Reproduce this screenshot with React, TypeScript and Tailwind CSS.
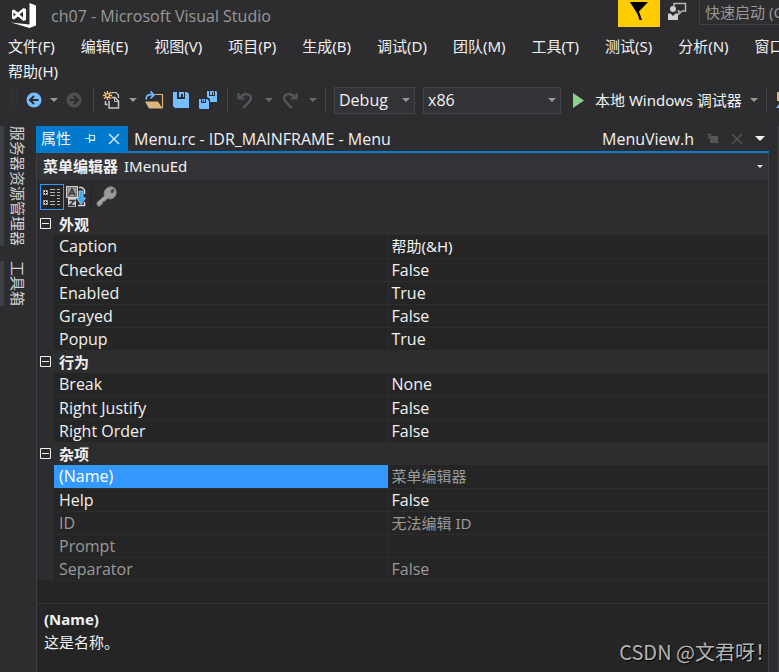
import { useState } from 'react'

interface Property {
  name: string
  value: string
  readOnly?: boolean
}

interface Category {
  label: string
  properties: Property[]
}

const MENU_ITEMS = [
  '文件(F)',
  '编辑(E)',
  '视图(V)',
  '项目(P)',
  '生成(B)',
  '调试(D)',
  '团队(M)',
  '工具(T)',
  '测试(S)',
  '分析(N)',
  '窗口',
]

const CATEGORIES: Category[] = [
  {
    label: '外观',
    properties: [
      { name: 'Caption', value: '帮助(&H)' },
      { name: 'Checked', value: 'False' },
      { name: 'Enabled', value: 'True' },
      { name: 'Grayed', value: 'False' },
      { name: 'Popup', value: 'True' },
    ],
  },
  {
    label: '行为',
    properties: [
      { name: 'Break', value: 'None' },
      { name: 'Right Justify', value: 'False' },
      { name: 'Right Order', value: 'False' },
    ],
  },
  {
    label: '杂项',
    properties: [
      { name: '(Name)', value: '菜单编辑器', readOnly: true },
      { name: 'Help', value: 'False' },
      { name: 'ID', value: '无法编辑 ID', readOnly: true },
      { name: 'Prompt', value: '', readOnly: true },
      { name: 'Separator', value: 'False', readOnly: true },
    ],
  },
]

// Chinese glyphs look larger than Latin ones, so they are set one size down
const hasChinese = (text: string) => /[\u4e00-\u9fff]/.test(text)

function Caret({ className = 'text-[#999999]' }: { className?: string }) {
  return (
    <svg width="8" height="4" viewBox="0 0 8 4" className={`shrink-0 ${className}`} aria-hidden="true">
      <path d="M0 0h8L4 4z" fill="currentColor" />
    </svg>
  )
}

function Separator() {
  return <div className="h-6 w-px shrink-0 bg-[#46464a]" />
}

function Logo() {
  return (
    <svg width="26" height="26" viewBox="0 0 26 26" className="shrink-0" aria-hidden="true">
      <path d="M18.5 0L25 2.500V22.500L18.500 25L0 19.500L18.500 21.500z" fill="#fff" />
      <path
        d="M1 7.500L3 6.500L7 9.500L12.500 5L15 6V17L12.500 18L7 13.500L3 16.500L1 15.500zM2.500 9.500V13.500L5 11.500zM12 8.500L8.500 11.500L12 14.500z"
        fill="#fff"
        fillRule="evenodd"
      />
    </svg>
  )
}

function FeedbackIcon() {
  return (
    <svg width="19" height="19" viewBox="0 0 19 19" aria-hidden="true">
      <path d="M6 4V1.500H17.500V9H14L11 12V9H9.500" fill="none" stroke="#b8b8b8" strokeWidth="1.500" />
      <circle cx="5" cy="7" r="3" fill="#d0d0d0" />
      <path d="M0 11.500H2.500L5 14L7.500 11.500H10V18H0z" fill="#d0d0d0" />
    </svg>
  )
}

function TitleBar() {
  return (
    <header className="flex h-[34px] items-start">
      <div className="flex h-8 min-w-0 flex-1 items-center gap-[14px] pl-[11px]">
        <Logo />
        <h1 className="truncate font-['Open_Sans',sans-serif] text-base text-[#999999]">ch07 - Microsoft Visual Studio</h1>
      </div>
      <button aria-label="通知" className="h-[27px] w-[42px] shrink-0 bg-[#ffcc00]">
        <svg width="42" height="27" viewBox="0 0 42 27" aria-hidden="true">
          <path d="M12 2H30L21 11.500L24 20H21.500L19.500 14z" fill="#000" />
        </svg>
      </button>
      <button aria-label="反馈" className="mr-3 ml-2 h-[22px] shrink-0">
        <FeedbackIcon />
      </button>
      <input
        aria-label="快速启动"
        placeholder="快速启动 (Ctrl+Q)"
        className="h-[25px] w-20 shrink-0 border border-t-0 border-r-0 border-[#3f3f46] pl-[5px] text-[15px] outline-none placeholder:text-[#999999]"
      />
    </header>
  )
}

function MenuBar() {
  return (
    <nav className="pl-2 text-[15px] leading-[25px]">
      <div className="flex gap-[26px] overflow-hidden whitespace-nowrap">
        {MENU_ITEMS.map((item) => (
          <button key={item} className="shrink-0">
            {item}
          </button>
        ))}
      </div>
      <button className="block">帮助(H)</button>
    </nav>
  )
}

function Grip() {
  return (
    <svg width="7" height="22" viewBox="0 0 7 22" className="shrink-0" aria-hidden="true">
      {[0, 4, 8, 12, 16, 20].map((y) => (
        <g key={y} fill="#46464a">
          <rect x="0" y={y} width="1" height="1" />
          <rect x="4" y={y} width="1" height="1" />
          <rect x="2" y={y + 2} width="1" height="1" />
          <rect x="6" y={y + 2} width="1" height="1" />
        </g>
      ))}
    </svg>
  )
}

function BackIcon() {
  return (
    <svg width="16" height="16" viewBox="0 0 16 16" aria-hidden="true">
      <circle cx="8" cy="8" r="7.500" fill="#75beff" />
      <path d="M12.500 8H4.500M8 4L4 8L8 12" fill="none" stroke="#2d2d30" strokeWidth="2" />
    </svg>
  )
}

function ForwardIcon() {
  return (
    <svg width="16" height="16" viewBox="0 0 16 16" aria-hidden="true">
      <circle cx="8" cy="8" r="7.500" fill="#505053" />
      <path d="M3.500 8H11.500M8 4L12 8L8 12" fill="none" stroke="#2d2d30" strokeWidth="2" />
    </svg>
  )
}

function NewProjectIcon() {
  return (
    <svg width="18" height="18" viewBox="0 0 18 18" aria-hidden="true">
      <path d="M9 2.500V1.500H13L15.500 4V7" fill="none" stroke="#c8c8c8" strokeWidth="1.200" />
      <path d="M2.500 10V13.500H4.500" fill="none" stroke="#c8c8c8" strokeWidth="1.500" />
      <path d="M8.500 6.500H12L15.500 10V17H6V9.500" fill="none" stroke="#c8c8c8" strokeWidth="1.500" />
      <path d="M11.500 6.500V10.500H15" fill="none" stroke="#c8c8c8" />
      <path d="M4.500 0V9M0 4.500H9M1.200 1.200L7.800 7.800M7.800 1.200L1.200 7.800" stroke="#ffc66d" strokeWidth="1.300" />
      <circle cx="4.500" cy="4.500" r="1.200" fill="#2d2d30" />
    </svg>
  )
}

function OpenIcon() {
  return (
    <svg width="19" height="18" viewBox="0 0 19 18" aria-hidden="true">
      <path d="M10 3.500H17.500V17" fill="none" stroke="#dcb67a" strokeWidth="1.200" />
      <path d="M0 10.500H13L17.500 17.500H4z" fill="#dcb67a" />
      <path d="M1.500 8.500C0.500 4 4 3 8 4" fill="none" stroke="#75beff" strokeWidth="1.700" />
      <path d="M5.500 0.500L9 4L5.500 7.500" fill="none" stroke="#75beff" strokeWidth="1.700" />
    </svg>
  )
}

function SaveIcon() {
  return (
    <svg width="16" height="16" viewBox="0 0 16 16" aria-hidden="true">
      <path d="M0 0H4V7H12V0H14L16 2V16H2L0 14z" fill="#75beff" />
      <path d="M6 0H11V5H10V2H8V5H6z" fill="#75beff" />
    </svg>
  )
}

function SaveAllIcon() {
  return (
    <svg width="19" height="19" viewBox="0 0 19 19" aria-hidden="true">
      <path d="M8 0H10V5H16V0H17L18 1V11H11V8L8 6z" fill="#75beff" />
      <path d="M11 0H15V4H14V1H13V4H11z" fill="#75beff" />
      <path d="M0 8H2V12H7V8H8L10 10V18H1L0 17z" fill="#75beff" />
      <path d="M3 8H6V11H5V9H4V11H3z" fill="#75beff" />
    </svg>
  )
}

function UndoIcon({ flipped = false }: { flipped?: boolean }) {
  return (
    <svg width="17" height="17" viewBox="0 0 17 17" aria-hidden="true">
      <g transform={flipped ? 'translate(17 0) scale(-1 1)' : undefined} fill="none" stroke="#555558">
        <path d="M2.500 6.500C7 0 13.500 1.500 14 6C14 9 10 12 6.500 16" strokeWidth="2.500" />
        <path d="M1.500 1V6.500H7.500" strokeWidth="2.200" />
      </g>
    </svg>
  )
}

interface ToolbarSelectProps {
  label: string
  options: string[]
  className: string
}

function ToolbarSelect({ label, options, className }: ToolbarSelectProps) {
  return (
    <div className={`relative shrink-0 ${className}`}>
      <select
        aria-label={label}
        className="h-[27px] w-full appearance-none border border-[#434346] bg-[#333337] pl-1 font-['Open_Sans',sans-serif] text-base leading-6 outline-none"
      >
        {options.map((option) => (
          <option key={option}>{option}</option>
        ))}
      </select>
      <span className="pointer-events-none absolute inset-y-0 right-[5px] flex items-center">
        <Caret />
      </span>
    </div>
  )
}

function Toolbar() {
  return (
    <div className="flex h-8 items-center overflow-hidden pl-[10px]">
      <Grip />
      <button aria-label="向后导航" className="ml-[9px]"><BackIcon /></button>
      <button aria-label="后退历史" className="ml-2"><Caret /></button>
      <button aria-label="向前导航" className="mr-[11px] ml-2"><ForwardIcon /></button>
      <Separator />
      <button aria-label="新建项目" className="ml-[9px]"><NewProjectIcon /></button>
      <button aria-label="新建" className="ml-2"><Caret /></button>
      <button aria-label="打开文件" className="ml-2"><OpenIcon /></button>
      <button aria-label="保存" className="ml-[9px]"><SaveIcon /></button>
      <button aria-label="全部保存" className="mr-[9px] ml-[10px]"><SaveAllIcon /></button>
      <Separator />
      <button aria-label="撤消" className="ml-[9px]"><UndoIcon /></button>
      <button aria-label="撤消历史" className="ml-[11px]"><Caret className="text-[#6a6a6d]" /></button>
      <button aria-label="重做" className="ml-2"><UndoIcon flipped /></button>
      <button aria-label="重做历史" className="mr-2 ml-[11px]"><Caret className="text-[#6a6a6d]" /></button>
      <Separator />
      <ToolbarSelect label="解决方案配置" options={['Debug', 'Release']} className="mr-2 ml-2 w-[81px]" />
      <ToolbarSelect label="解决方案平台" options={['x86', 'x64']} className="w-[138px]" />
      <button className="ml-3 flex shrink-0 items-center text-[15px] whitespace-nowrap">
        <svg width="11" height="15" viewBox="0 0 11 15" className="mr-[11px]" aria-hidden="true">
          <path d="M0 0L11 7.500L0 15z" fill="#8dd28a" />
        </svg>
        本地 Windows 调试器
        <Caret className="mr-2 ml-2 text-[#999999]" />
      </button>
      <Separator />
      <svg width="16" height="16" viewBox="0 0 16 16" className="ml-[9px] shrink-0" aria-hidden="true">
        <path d="M1 0H15V9H1z" fill="#dcb67a" />
        <path d="M0 16L4 11H8L12 16z" fill="#75beff" />
      </svg>
    </div>
  )
}

function SideStrip() {
  return (
    <aside className="flex w-9 shrink-0 flex-col items-start gap-[15px] text-[15px] text-[#d0d0d0]">
      <button className="w-[31px] border-l-4 border-[#3f3f46] leading-[27px] [text-orientation:sideways] [writing-mode:vertical-rl]">
        服务器资源管理器
      </button>
      <button className="w-[31px] border-l-4 border-[#3f3f46] leading-[27px] [text-orientation:sideways] [writing-mode:vertical-rl]">
        工具箱
      </button>
    </aside>
  )
}

function CloseIcon({ className }: { className: string }) {
  return (
    <svg width="12" height="12" viewBox="0 0 12 12" className={className} aria-hidden="true">
      <path d="M1 1L11 11M11 1L1 11" stroke="currentColor" strokeWidth="1.500" />
    </svg>
  )
}

function TabRow() {
  return (
    <div className="flex h-[27px] items-stretch border-b-2 border-[#007acc] text-base">
      <div className="flex w-[92px] shrink-0 items-center bg-[#007acc] pl-[5px]">
        <button className="text-[15px]">属性</button>
        <button aria-label="固定" className="ml-[14px]">
          <svg width="11" height="9" viewBox="0 0 11 9" aria-hidden="true">
            <path d="M0 4.500H4M4.500 0V9M5 1.500H9.500V6.500H5M5 6H10" fill="none" stroke="#d0e6f5" strokeWidth="1.200" />
          </svg>
        </button>
        <button aria-label="关闭" className="ml-3">
          <CloseIcon className="text-[#d0e6f5]" />
        </button>
      </div>
      <button className="min-w-0 truncate pl-[6px] font-['Open_Sans',sans-serif]">Menu.rc - IDR_MAINFRAME - Menu</button>
      <div className="ml-auto flex shrink-0 items-center pr-1">
        <button className="font-['Open_Sans',sans-serif]">MenuView.h</button>
        <button aria-label="保持打开" className="ml-[13px]">
          <svg width="12" height="9" viewBox="0 0 12 9" aria-hidden="true">
            <path d="M0 0H4V2H11V8H12V9H3V4H0V3H2V1H0z" fill="#555558" />
          </svg>
        </button>
        <button aria-label="关闭预览" className="ml-3">
          <CloseIcon className="text-[#555558]" />
        </button>
        <button aria-label="活动文件" className="ml-3">
          <svg width="10" height="5" viewBox="0 0 10 5" aria-hidden="true">
            <path d="M0 0H10L5 5z" fill="#f1f1f1" />
          </svg>
        </button>
      </div>
    </div>
  )
}

function CategorizedIcon() {
  return (
    <svg width="18" height="18" viewBox="0 0 18 18" aria-hidden="true">
      <path
        d="M0.500 2.500H4.500V6.500H0.500zM0.500 12.500H4.500V16.500H0.500z"
        fill="#f1f1f1"
        stroke="#a0a0a0"
      />
      <path d="M1 4.500H4M2.500 3V6M1 14.500H4M2.500 13V16" stroke="#252526" />
      <path
        d="M7 1.500H12M14 1.500H17M7 4.500H12M14 4.500H17M7 7.500H12M14 7.500H17M14 10.500H17M7 13.500H12M14 13.500H17M7 16.500H12M14 16.500H17"
        stroke="#b4b4b4"
      />
    </svg>
  )
}

function AlphabeticalIcon() {
  return (
    <svg width="20" height="21" viewBox="0 0 20 21" aria-hidden="true">
      <path d="M0 0H12V12H0zM2 12H10V21H2z" fill="#d0d0d0" />
      <path d="M1.500 1.500H10.500V10.500H1.500z" fill="#9a9a9a" stroke="#777" />
      <path d="M3 9.500L6 3L9 9.500M4 7.500H8M3.500 14.500H8.500L3.500 19.500H9" fill="none" stroke="#333337" strokeWidth="1.500" />
      <path d="M13 1.500H16L18.500 4V8M12 19.500H18.500V16" fill="none" stroke="#d8d8d8" strokeWidth="1.500" />
      <path d="M13 5H17V12H19.500L15 18.500L10.500 12H13z" fill="#3fa9f0" stroke="#b8dcf5" strokeWidth="0.700" />
    </svg>
  )
}

function WrenchIcon() {
  return (
    <svg width="21" height="21" viewBox="0 0 21 21" aria-hidden="true">
      <path
        d="M1 16.500L8.500 10C7 5 10.500 0.800 15 0.800C18 0.800 20.200 3 20.200 6.500C20.200 11 16 14 11.500 12.500L8 15.500H6.500V17.500L3.500 20.200C1.500 20.200 0.500 18.500 1 16.500z"
        fill="#9a9a9a"
        stroke="#828282"
      />
      <path d="M14.500 4.500L17 2.500L18.500 4.500L17 7H15z" fill="#4a4a4d" />
      <path d="M2.500 17L9.500 11" stroke="#bdbdbd" />
    </svg>
  )
}

interface PropertyGridProps {
  selected: string
  onSelect: (name: string) => void
}

function PropertyGrid({ selected, onSelect }: PropertyGridProps) {
  const [collapsed, setCollapsed] = useState<string[]>([])

  const toggle = (label: string) =>
    setCollapsed((prev) => (prev.includes(label) ? prev.filter((l) => l !== label) : [...prev, label]))

  return (
    <table className="w-full table-fixed border-collapse leading-[22px]">
      <colgroup>
        <col className="w-[17px]" />
        <col className="w-[334px]" />
        <col />
      </colgroup>
      {CATEGORIES.map((category) => {
        const open = !collapsed.includes(category.label)
        return (
          <tbody key={category.label}>
            <tr className="h-[23px] bg-[#2d2d30]">
              <th colSpan={3} className="p-0 text-left text-[15px] font-bold">
                <button
                  aria-expanded={open}
                  onClick={() => toggle(category.label)}
                  className="flex items-center gap-2 pl-[3px]"
                >
                  <svg width="11" height="11" viewBox="0 0 11 11" aria-hidden="true">
                    <path d="M0.500 0.500H10.500V10.500H0.500zM2 5.500H9" fill="none" stroke="#f1f1f1" />
                    {!open && <path d="M5.500 2V9" stroke="#f1f1f1" />}
                  </svg>
                  {category.label}
                </button>
              </th>
            </tr>
            {open &&
              category.properties.map((prop) => {
                const active = prop.name === selected
                const nameColor = active ? 'bg-[#3399ff] text-white' : prop.readOnly ? 'text-[#999999]' : ''
                const valueFont = hasChinese(prop.value) ? 'text-[15px]' : "font-['Open_Sans',sans-serif] text-base"
                return (
                  <tr key={prop.name} onClick={() => onSelect(prop.name)} className="h-[23px] leading-[22px]">
                    <td className="bg-[#2d2d30] p-0" />
                    <td
                      className={`border-b border-[#2d2d30] py-0 pr-0 pl-[5px] font-['Open_Sans',sans-serif] text-[length:16px] ${nameColor}`}
                    >
                      {prop.name}
                    </td>
                    <td
                      className={`border-b border-l border-[#2d2d30] py-0 pr-0 pl-[3px] ${prop.readOnly ? 'text-[#999999]' : ''}`}
                    >
                      <span className={`block leading-[22px] ${valueFont}`}>{prop.value}</span>
                    </td>
                  </tr>
                )
              })}
          </tbody>
        )
      })}
    </table>
  )
}

function PropertiesPanel() {
  const [selected, setSelected] = useState('(Name)')

  return (
    <section className="flex flex-1 flex-col border-x border-[#3f3f46] bg-[#252526]">
      <button className="flex h-7 items-center border-b border-[#28282b] bg-[#333337] pr-[5px] pl-[6px] text-[15px]">
        <span className="font-bold">菜单编辑器</span>
        <span className="ml-[6px]">IMenuEd</span>
        <svg width="6" height="3" viewBox="0 0 6 3" className="ml-auto" aria-hidden="true">
          <path d="M0 0H6L3 3z" fill="#f1f1f1" />
        </svg>
      </button>
      <div className="flex h-[31px] items-center bg-[#2d2d30] pl-[3px]">
        <button
          aria-label="按分类顺序"
          className="flex h-[26px] w-6 items-center justify-center border border-[#3399ff] bg-[#252526]"
        >
          <CategorizedIcon />
        </button>
        <button aria-label="字母顺序" className="mr-[5px] ml-[2px]"><AlphabeticalIcon /></button>
        <div className="h-6 w-px bg-[#222224]" />
        <button aria-label="属性页" className="ml-1"><WrenchIcon /></button>
      </div>
      <PropertyGrid selected={selected} onSelect={setSelected} />
      <div className="h-[22px]" />
      <div className="flex-1 border-t border-[#333337] px-[7px] pt-1 text-[15px] leading-[23px]">
        <p className="font-bold">{selected}</p>
        <p>这是名称。</p>
      </div>
    </section>
  )
}

export default function App() {
  return (
    <div className="relative flex min-h-screen flex-col overflow-hidden bg-[#2d2d30] font-['Noto_Sans','Noto_Sans_CJK_SC',sans-serif] text-[#f1f1f1]">
      <TitleBar />
      <MenuBar />
      <Toolbar />
      <main className="flex flex-1 pt-[10px]">
        <SideStrip />
        <div className="flex min-w-0 flex-1 flex-col">
          <TabRow />
          <PropertiesPanel />
        </div>
        <div className="w-[10px] shrink-0 border-r border-[#3f3f46]" />
      </main>
      <p className="absolute right-1 bottom-1 font-['Noto_Sans_CJK_SC',sans-serif] text-[20px] leading-8 text-[#b4b4b4] [text-shadow:1px_1px_1px_#000]">
        CSDN @文君呀！
      </p>
    </div>
  )
}
